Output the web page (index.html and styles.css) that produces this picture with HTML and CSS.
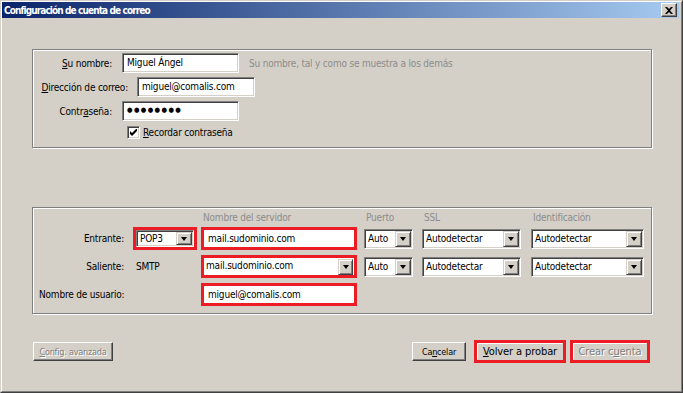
FILE: index.html
```html
<!DOCTYPE html>
<html lang="es">
<head>
    <meta charset="UTF-8">
    <title>Configuración de cuenta de correo</title>
    <link rel="stylesheet" href="styles.css">
</head>
<body>
    <div class="window">
        <div class="frame">
            <div class="titlebar">
                <span class="title">Configuración de cuenta de correo</span>
                <span class="close">
                    <svg width="8" height="7" viewBox="0 0 8 7"><path d="M0 0h2l2 2 2-2h2L5 3.5 8 7H6L4 5 2 7H0l3-3.5z" fill="#000"/></svg>
                </span>
            </div>

            <div class="content">
                <div class="group identity">
                    <div class="row">
                        <label class="lbl"><u>S</u>u nombre:</label>
                        <div class="field w117">Miguel Ángel</div>
                        <span class="hint">Su nombre, tal y como se muestra a los demás</span>
                    </div>
                    <div class="row">
                        <label class="lbl lbl-wide"><u>D</u>irección de correo:</label>
                        <div class="field w118">miguel@comalis.com</div>
                    </div>
                    <div class="row">
                        <label class="lbl">Contr<u>a</u>seña:</label>
                        <div class="field w117 dots">●●●●●●●●</div>
                    </div>
                    <div class="row check-row">
                        <span class="checkbox">
                            <svg width="7" height="7" viewBox="0 0 7 7"><path d="M0 2v3l2 2 5-5V-1L2 4z" fill="#000"/></svg>
                        </span>
                        <label><u>R</u>ecordar contraseña</label>
                    </div>
                </div>

                <div class="group servers">
                    <div class="head"></div>
                    <div class="head"></div>
                    <div class="head">Nombre del servidor</div>
                    <div class="head">Puerto</div>
                    <div class="head">SSL</div>
                    <div class="head">Identificación</div>

                    <div class="rlbl">Entrante:</div>
                    <div class="hl w64"><div class="select flat"><span>POP3</span><i class="arrow"></i></div></div>
                    <div class="hl w156"><div class="plain">mail.sudominio.com</div></div>
                    <div class="select w49"><span>Auto</span><i class="arrow"></i></div>
                    <div class="select w99"><span>Autodetectar</span><i class="arrow"></i></div>
                    <div class="select w113"><span>Autodetectar</span><i class="arrow"></i></div>

                    <div class="rlbl">Saliente:</div>
                    <div class="proto">SMTP</div>
                    <div class="hl w156"><div class="plain with-arrow"><span>mail.sudominio.com</span><i class="arrow"></i></div></div>
                    <div class="select w49"><span>Auto</span><i class="arrow"></i></div>
                    <div class="select w99"><span>Autodetectar</span><i class="arrow"></i></div>
                    <div class="select w113"><span>Autodetectar</span><i class="arrow"></i></div>

                    <div class="ulbl">Nombre de usuario:</div>
                    <div class="hl w156"><div class="plain">miguel@comalis.com</div></div>
                </div>

                <div class="actions">
                    <button class="btn disabled w80"><u>C</u>onfig. avanzada</button>
                    <span class="spacer"></span>
                    <button class="btn w54">Ca<u>n</u>celar</button>
                    <div class="hl big w92"><button class="btn"><u>V</u>olver a probar</button></div>
                    <div class="hl big w80"><button class="btn disabled">Crear c<u>u</u>enta</button></div>
                </div>
            </div>
        </div>
    </div>
</body>
</html>
```

FILE: styles.css
```css
* {
    box-sizing: border-box;
}
body {
    margin: 0;
    background-color: #d4d0c8;
    font-family: 'DejaVu Sans Condensed', 'Liberation Sans', sans-serif;
    font-size: 10px;
    letter-spacing: -0.2px;
    color: #000;
}
.window {
    width: 683px;
    height: 393px;
    border: 1px solid;
    border-color: #d4d0c8 #404040 #404040 #d4d0c8;
}
.frame {
    height: 100%;
    border: 1px solid;
    border-color: #fff #808080 #808080 #fff;
    padding-right: 2px;
}
.titlebar {
    height: 16px;
    display: flex;
    align-items: center;
    justify-content: space-between;
    padding: 0 2px 0 2px;
    background: linear-gradient(to right, #0a246a, #a6caf0);
}
.title {
    color: #fff;
    font-weight: bold;
    font-size: 10px;
    letter-spacing: -0.9px;
    white-space: nowrap;
}
.close {
    width: 16px;
    height: 14px;
    display: flex;
    align-items: center;
    justify-content: center;
    background: #d4d0c8;
    border: 1px solid;
    border-color: #fff #404040 #404040 #fff;
    box-shadow: inset -1px -1px 0 #808080;
}
.content {
    padding: 31px 27px 0 30px;
}

/* group boxes */
.group {
    border: 1px solid #808080;
    box-shadow: inset 1px 1px 0 #fff, 1px 1px 0 #fff;
}
.identity {
    height: 99px;
    padding: 3px 0 0 5px;
    display: flex;
    flex-direction: column;
    gap: 4px;
}
.row {
    display: flex;
    align-items: center;
    height: 20px;
    white-space: nowrap;
}
.lbl {
    width: 74px;
    margin-right: 10px;
    text-align: right;
}
.lbl-wide {
    width: 90px;
    margin-right: 9px;
}
.field {
    height: 20px;
    background: #fff;
    border: 1px solid;
    border-color: #808080 #fff #fff #808080;
    box-shadow: inset 1px 1px 0 #404040, inset -1px -1px 0 #d4d0c8;
    padding: 0 4px;
    line-height: 18px;
    white-space: nowrap;
}
.dots {
    font-size: 7px;
    letter-spacing: 1.4px;
    line-height: 17px;
}
.hint {
    margin-left: 10px;
    color: #8c8c8c;
}
.check-row {
    height: 14px;
    padding-left: 89px;
}
.checkbox {
    width: 13px;
    height: 13px;
    margin-right: 3px;
    display: flex;
    align-items: center;
    justify-content: center;
    background: #fff;
    border: 1px solid;
    border-color: #808080 #fff #fff #808080;
    box-shadow: inset 1px 1px 0 #404040, inset -1px -1px 0 #d4d0c8;
}

/* server table */
.servers {
    margin-top: 59px;
    height: 107px;
    padding: 0 0 7px 5px;
    display: grid;
    grid-template-columns: 95px 68px 163px 58px 109px 113px;
    grid-template-rows: 14px 23px 23px 23px;
    row-gap: 5px;
    align-items: center;
    white-space: nowrap;
}
.head {
    color: #8c8c8c;
    align-self: start;
    padding: 3px 0 0 2px;
    line-height: 14px;
}
.rlbl {
    text-align: right;
    padding-right: 9px;
}
.ulbl {
    grid-column: 1 / 3;
    padding-left: 1px;
}
.proto {
    padding-left: 3px;
}
.hl {
    height: 23px;
    border: 3px solid #ec1c24;
    background: #fff;
}
.w49 { width: 49px; }
.w54 { width: 54px; }
.w64 { width: 64px; }
.w80 { width: 80px; }
.w92 { width: 92px; }
.w99 { width: 99px; }
.w113 { width: 113px; }
.w117 { width: 117px; }
.w118 { width: 118px; }
.w156 { width: 156px; }
.select {
    height: 20px;
    display: flex;
    align-items: stretch;
    background: #fff;
    border: 1px solid;
    border-color: #808080 #fff #fff #808080;
    box-shadow: inset 1px 1px 0 #404040, inset -1px -1px 0 #d4d0c8;
    padding: 1px;
}
.select span,
.plain span {
    flex: 1;
    padding-left: 2px;
    line-height: 16px;
    white-space: nowrap;
    overflow: hidden;
}
.select.flat {
    height: 17px;
}
.select.flat span {
    line-height: 14px;
}
.arrow {
    width: 16px;
    flex: none;
    background: #d4d0c8;
    border: 1px solid;
    border-color: #d4d0c8 #404040 #404040 #d4d0c8;
    box-shadow: inset 1px 1px 0 #fff, inset -1px -1px 0 #808080;
    position: relative;
}
.arrow::after {
    content: '';
    position: absolute;
    left: 4px;
    top: 50%;
    margin-top: -2px;
    border-left: 3.5px solid transparent;
    border-right: 3.5px solid transparent;
    border-top: 4px solid #000;
}
.plain {
    height: 17px;
    line-height: 17px;
    padding-left: 4px;
    white-space: nowrap;
}
.plain.with-arrow {
    display: flex;
    padding-left: 0;
}
.plain.with-arrow .arrow {
    width: 15px;
    margin: 1px 1px 0 0;
}

/* buttons */
.actions {
    margin-top: 26px;
    height: 23px;
    display: flex;
    align-items: center;
    padding: 0 2px 0 1px;
}
.spacer {
    flex: 1;
}
.btn {
    height: 19px;
    padding: 0;
    font-family: 'DejaVu Sans Condensed', 'Liberation Sans', sans-serif;
    font-size: 9px;
    letter-spacing: -0.2px;
    white-space: nowrap;
    color: #000;
    background: #d4d0c8;
    border: 1px solid;
    border-color: #fff #404040 #404040 #fff;
    box-shadow: inset -1px -1px 0 #808080;
}
.btn.disabled {
    color: #808080;
    text-shadow: 1px 1px 0 #fff;
}
.actions > .btn.w54 {
    margin-right: 8px;
}
.hl.big {
    background: #d4d0c8;
    display: flex;
}
.hl.big + .hl.big {
    margin-left: 4px;
}
.hl.big .btn {
    width: 100%;
    height: 100%;
    font-size: 11px;
    letter-spacing: -0.1px;
    border-color: #fff #d4d0c8 #d4d0c8 #fff;
    box-shadow: none;
}
```
